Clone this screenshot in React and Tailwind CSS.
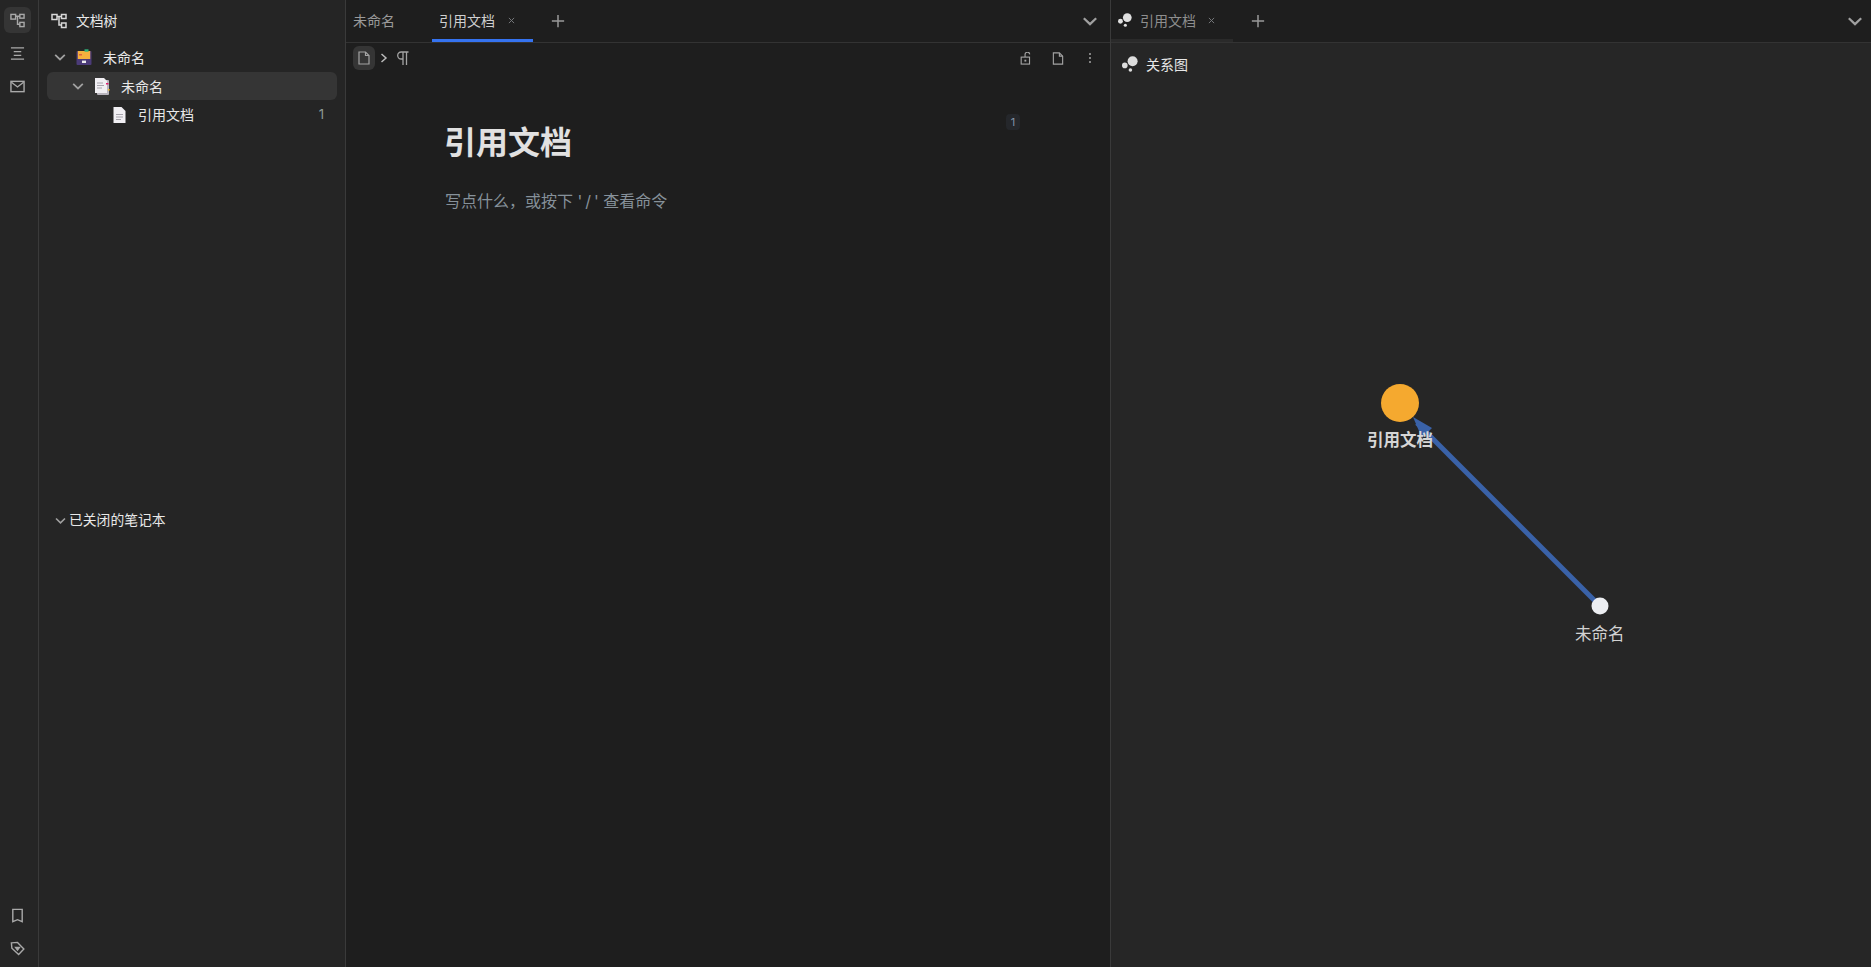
import React from 'react';

const FONT = '"Inter", "Liberation Sans", "Noto Sans CJK SC", sans-serif';

const TreeIcon = ({ className }) => (
  <svg className={className} viewBox="0 0 16 16" fill="none" stroke="currentColor" strokeWidth="1.5">
    <rect x="1" y="1.5" width="5" height="5" />
    <rect x="10.5" y="1.5" width="4.5" height="4" />
    <rect x="10.5" y="10" width="4.5" height="4.5" />
    <path d="M6 3.5h4.5M8 3.5v8.5h2.5" />
  </svg>
);

const Chevron = ({ className }) => (
  <svg className={className} viewBox="0 0 16 16" fill="none" stroke="currentColor" strokeWidth="2">
    <path d="M2.5 5.5 8 10.8l5.5-5.3" />
  </svg>
);

const Plus = ({ className }) => (
  <svg className={className} viewBox="0 0 16 16" fill="none" stroke="currentColor" strokeWidth="1.7">
    <path d="M8 1v14M1 8h14" />
  </svg>
);

const Close = () => (
  <svg className="h-[7px] w-[7px] text-[#77797c]" viewBox="0 0 8 8" fill="none" stroke="currentColor" strokeWidth="1.1">
    <path d="M1 1l6 6M7 1 1 7" />
  </svg>
);

const FileIcon = ({ className }) => (
  <svg className={className} viewBox="0 0 12 14" fill="none" stroke="currentColor" strokeWidth="1.2">
    <path d="M1 1h6.5L11 4.5V13H1z" />
    <path d="M7.5 1v3.5H11" />
  </svg>
);

const DotsIcon = ({ className }) => (
  <svg className={className} viewBox="0 0 16 16" fill="currentColor">
    <circle cx="10.6" cy="5.2" r="5" />
    <circle cx="2.8" cy="9.4" r="2.8" />
    <circle cx="8.4" cy="14" r="1.8" />
  </svg>
);

const DrawerIcon = () => (
  <svg className="h-4 w-4" viewBox="0 0 16 16">
    <rect x="0.5" y="2" width="15" height="14" rx="1" fill="#4b3b78" />
    <rect x="1.8" y="2" width="12.4" height="8" fill="#f5b13d" />
    <rect x="8.5" y="0.3" width="4" height="2.4" fill="#2fb37a" />
    <rect x="3" y="5" width="3" height="1.5" fill="#e2603f" />
    <rect x="6" y="11.6" width="4" height="2.4" fill="#eee" />
  </svg>
);

const DocStackIcon = () => (
  <svg className="h-[17px] w-4" viewBox="0 0 16 17">
    <rect x="3" y="2" width="12" height="15" rx="1" fill="#b9b5bd" />
    <path d="M1 0h9l3 3v12H1z" fill="#f1eff3" />
    <path d="M3 5h6M3 7.5h7M3 10h5" stroke="#a6a3ab" strokeWidth="1" />
    <rect x="12" y="5" width="2.5" height="1.5" fill="#e0206f" />
    <rect x="14" y="11" width="1.6" height="1.6" fill="#f3c02d" />
  </svg>
);

const DocIcon = () => (
  <svg className="h-4 w-[13px]" viewBox="0 0 13 16">
    <path d="M0.5 0h8l4 4v12h-12z" fill="#f1eff3" />
    <path d="M3 7.5h7M3 10h7M3 12.5h5" stroke="#a6a3ab" strokeWidth="1" />
  </svg>
);

const RailButton = ({ active, children }) => (
  <div className={`flex h-[26px] w-[27px] items-center justify-center rounded-md ${active ? 'bg-[#353535]' : ''}`}>
    {children}
  </div>
);

const Rail = () => (
  <div className="flex w-[39px] shrink-0 flex-col items-center justify-between border-r border-[#3a3a3a] bg-[#252525] pt-[7px] pr-[3px] pb-[6px] text-[#a9a9a9]">
    <div className="flex flex-col items-center gap-[7px]">
      <RailButton active>
        <TreeIcon className="h-[15px] w-[15px]" />
      </RailButton>
      <RailButton>
        <svg className="h-[15px] w-[15px]" viewBox="0 0 16 16" fill="none" stroke="currentColor" strokeWidth="1.5">
          <path d="M1 2h14M4 6h8M4 10h8M1 14h14" />
        </svg>
      </RailButton>
      <RailButton>
        <svg className="h-[15px] w-[15px]" viewBox="0 0 16 16" fill="none" stroke="currentColor" strokeWidth="1.5">
          <rect x="1" y="2.5" width="14" height="11" />
          <path d="m1.5 3.5 6.5 5 6.5-5" />
        </svg>
      </RailButton>
    </div>
    <div className="flex flex-col items-center gap-[7px]">
      <RailButton>
        <svg className="h-[15px] w-[15px]" viewBox="0 0 16 16" fill="none" stroke="currentColor" strokeWidth="1.5">
          <path d="M3 1.5h10v13L8 12.5l-5 2z" />
        </svg>
      </RailButton>
      <RailButton>
        <svg className="h-[15px] w-[15px]" viewBox="0 0 16 16" fill="none" stroke="currentColor" strokeWidth="1.5">
          <path d="M1.5 2 8 1.5l6.8 7-5.6 6-7.2-6.8z" />
          <path d="M6 7h4l-2 2.6z" fill="currentColor" />
        </svg>
      </RailButton>
    </div>
  </div>
);

const Sidebar = () => (
  <div className="flex w-[307px] shrink-0 flex-col border-r border-[#3a3a3a] bg-[#252525] text-[14px] text-[#e8e8e8]">
    <div className="flex h-[42px] items-center gap-[9px] pl-[12px]">
      <TreeIcon className="h-[16px] w-[16px] text-[#d8d8d8]" />
      <span className="text-[13.8px]">文档树</span>
    </div>
    <div className="flex flex-col pl-[8px] pr-[8px]">
      <div className="flex h-[30px] items-center pl-[6px]">
        <Chevron className="mr-[9px] h-[14px] w-[14px] text-[#a0a0a0]" />
        <DrawerIcon />
        <span className="ml-[11px]">未命名</span>
      </div>
      <div className="flex h-[28px] items-center rounded-md bg-[#353535] pl-[24px]">
        <Chevron className="mr-[9px] h-[14px] w-[14px] text-[#a0a0a0]" />
        <DocStackIcon />
        <span className="ml-[11px]">未命名</span>
      </div>
      <div className="flex h-[29px] items-center justify-between pr-[13px] pl-[66px]">
        <div className="flex items-center">
          <DocIcon />
          <span className="ml-[12px]">引用文档</span>
        </div>
        <span className="text-[13px] text-[#8f9c96]">1</span>
      </div>
    </div>
    <div className="mt-[381px] flex items-center pl-[15px]">
      <Chevron className="mr-[2px] h-[13px] w-[13px] text-[#a0a0a0]" />
      <span className="text-[13.8px]">已关闭的笔记本</span>
    </div>
  </div>
);

const Editor = () => (
  <div className="flex w-[765px] shrink-0 flex-col border-r border-[#3a3a3a] bg-[#1e1e1e]">
    <div className="flex h-[43px] shrink-0 items-center border-b border-[#333333] text-[14px]">
      <span className="mb-[2px] ml-[7px] w-[79px] text-[#9a9a9a]">未命名</span>
      <div className="flex h-full w-[101px] items-center gap-[13px] border-b-[3px] border-[#3573f0] pl-[7px] pt-[1px] text-[#cfcfcf]">
        <span>引用文档</span>
        <Close />
      </div>
      <Plus className="ml-[18px] h-[14px] w-[14px] text-[#9a9a9a]" />
      <Chevron className="mr-[11px] ml-auto h-[18px] w-[18px] text-[#a0a0a0]" />
    </div>
    <div className="flex h-[30px] shrink-0 items-center justify-between pr-[14px] pl-[7px] text-[#a4a4a4]">
      <div className="flex items-center">
        <div className="flex h-[24px] w-[22px] items-center justify-center rounded-md bg-[#353535]">
          <FileIcon className="h-[14px] w-[12px]" />
        </div>
        <svg className="ml-[5px] h-[10px] w-[8px]" viewBox="0 0 8 10" fill="none" stroke="#bbbbbb" strokeWidth="1.5">
          <path d="m1.5 1 4.5 4-4.5 4" />
        </svg>
        <svg className="ml-[8px] h-[14px] w-[13px]" viewBox="0 0 13 14" fill="none" stroke="currentColor" strokeWidth="1.3">
          <path d="M12.5 1H5.2a3.4 3.4 0 0 0 0 7H7M7 1v13M10.5 1v13" />
        </svg>
      </div>
      <div className="flex items-center gap-[19px]">
        <svg className="h-[13px] w-[12px]" viewBox="0 0 12 14" fill="none" stroke="currentColor" strokeWidth="1.2">
          <rect x="0.8" y="5.5" width="9" height="7.5" />
          <path d="M5 5.5V3a2.5 2.5 0 0 1 5-.5" />
          <rect x="4.3" y="8.3" width="2" height="2" fill="currentColor" stroke="none" />
        </svg>
        <FileIcon className="ml-px h-[13px] w-[12px]" />
        <svg className="ml-px h-[12px] w-[12px]" viewBox="0 0 12 12" fill="currentColor">
          <circle cx="6" cy="2" r="1" />
          <circle cx="6" cy="6" r="1" />
          <circle cx="6" cy="10" r="1" />
        </svg>
      </div>
    </div>
    <div className="relative pl-[99px]">
      <h1 className="mt-[48px] -ml-px text-[32px] leading-[44px] font-bold text-[#e1e1e1]">引用文档</h1>
      <p className="mt-[22px] text-[16px] leading-[28px] text-[#86919a]">写点什么，或按下 '&#8201;/&#8201;' 查看命令</p>
      <div className="absolute top-[41px] left-[660px] flex h-[16px] w-[14px] items-center justify-center rounded bg-[#25272b] text-[11px] text-[#8494a8]">
        1
      </div>
    </div>
  </div>
);

const Graph = () => (
  <div className="relative flex-1">
    <svg className="absolute inset-0 h-full w-full" fill="none">
      {/* node and link positions taken from the panel origin */}
      <line x1="489" y1="521" x2="306" y2="338" stroke="#3a62a8" strokeWidth="5" />
      <polygon points="302,332 321,343 311,353" fill="#3a62a8" />
      <circle cx="289" cy="318" r="19" fill="#f5a92f" />
      <circle cx="489" cy="521" r="8.5" fill="#eceef2" />
    </svg>
    <span className="absolute top-[343px] left-[256px] text-[16.5px] font-bold text-[#d6d6d6]">引用文档</span>
    <span className="absolute top-[537px] left-[464px] text-[16.5px] text-[#d2d2d2]">未命名</span>
  </div>
);

const GraphPanel = () => (
  <div className="flex flex-1 flex-col bg-[#262626]">
    <div className="flex h-[43px] shrink-0 items-center border-b border-[#333333] bg-[#1e1e1e] text-[14px]">
      <div className="flex h-full w-[122px] items-center border-b-[3px] border-[#2a2a2a] pl-[7px] pt-[1px] text-[#8e8e8e]">
        <DotsIcon className="h-[14px] w-[14px] text-[#e0e0e0]" />
        <span className="ml-[8px]">引用文档</span>
        <span className="ml-[12px]">
          <Close />
        </span>
      </div>
      <Plus className="ml-[18px] h-[14px] w-[14px] text-[#9a9a9a]" />
      <Chevron className="mr-[7px] ml-auto h-[18px] w-[18px] text-[#a0a0a0]" />
    </div>
    <div className="flex h-[42px] shrink-0 items-center pl-[11px] text-[14px] text-[#e8e8e8]">
      <DotsIcon className="h-[16px] w-[16px] text-[#dddddd]" />
      <span className="ml-[8px]">关系图</span>
    </div>
    <Graph />
  </div>
);

export default function App() {
  return (
    <div className="flex h-screen w-full overflow-hidden bg-[#1e1e1e]" style={{ fontFamily: FONT }}>
      <Rail />
      <Sidebar />
      <Editor />
      <GraphPanel />
    </div>
  );
}
